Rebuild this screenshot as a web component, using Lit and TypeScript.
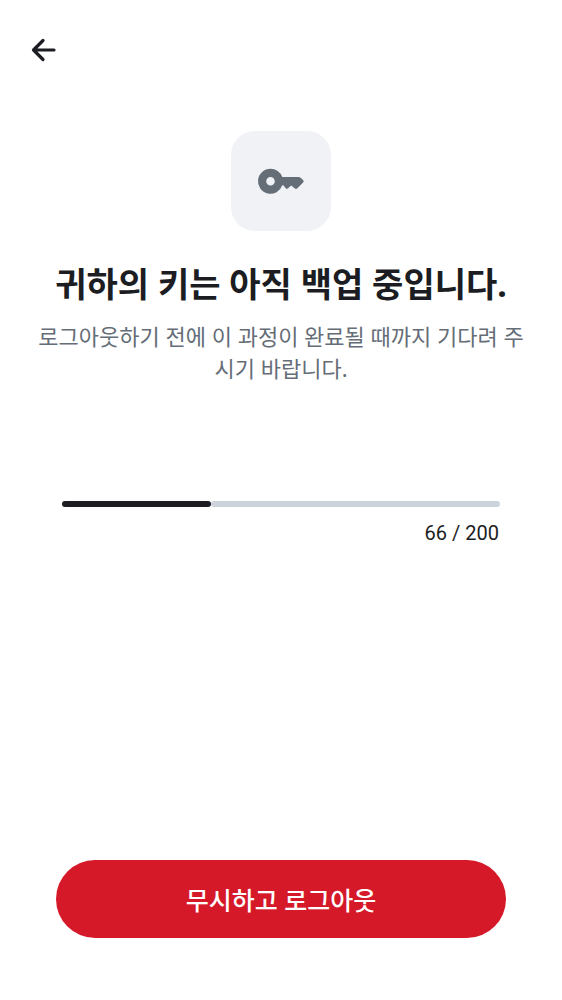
import { LitElement, html, css } from "lit";
import { customElement, property } from "lit/decorators.js";

@customElement("app-root")
export class AppRoot extends LitElement {
  @property({ type: Number }) done = 66;
  @property({ type: Number }) total = 200;

  static styles = css`
    :host {
      display: flex;
      flex-direction: column;
      box-sizing: border-box;
      min-height: 100vh;
      background: #fff;
      color: #1b1d22;
      font-family: "Noto Sans", "Noto Sans CJK KR", sans-serif;
    }
    header {
      padding: 32px 26px;
      display: flex;
    }
    .back {
      width: 36px;
      height: 36px;
      padding: 0;
      border: 0;
      background: none;
      display: grid;
      place-items: center;
      color: #1b1d22;
    }
    main {
      flex: 1;
      padding: 31px 32px 0;
      display: flex;
      flex-direction: column;
      align-items: center;
    }
    .tile {
      width: 100px;
      height: 100px;
      border-radius: 24px;
      background: #f0f2f5;
      display: grid;
      place-items: center;
      color: #656d77;
    }
    h1 {
      margin: 29px 0 0;
      font-size: 34px;
      line-height: 48px;
      font-weight: 700;
      text-align: center;
    }
    p {
      margin: 12px 0 0;
      font-size: 22px;
      line-height: 32px;
      color: #656d77;
      text-align: center;
    }
    .progress {
      align-self: stretch;
      margin: 117px 30px 0;
    }
    .track {
      display: flex;
      padding-right: 6px;
    }
    .bar {
      flex: none;
      height: 6px;
      padding: 0 3px;
      border-radius: 3px;
      background: #1b1d22;
    }
    .rest {
      flex: 1;
      margin-right: -6px;
      border-radius: 3px;
      background: #cdd3da;
    }
    .count {
      margin-top: 13px;
      padding-right: 1px;
      font-family: Roboto, sans-serif;
      font-size: 20px;
      line-height: 26px;
      text-align: right;
    }
    footer {
      padding: 0 56px 62px;
    }
    .logout {
      width: 100%;
      height: 78px;
      padding: 2px 0 0;
      border: 0;
      border-radius: 39px;
      background: #d51928;
      color: #fff;
      font: 500 25px/36px "Noto Sans", "Noto Sans CJK KR", sans-serif;
    }
    svg {
      display: block;
    }
  `;

  render() {
    return html`
      <header>
        <button class="back" aria-label="뒤로">
          <svg width="36" height="36" viewBox="0 0 36 36" fill="none" stroke="currentColor" stroke-width="3.2" stroke-linecap="round" stroke-linejoin="round">
            <path d="M28 18H8M17 8.5L7.500 18L17 27.500" />
          </svg>
        </button>
      </header>
      <main>
        <div class="tile">
          <svg width="54" height="34" viewBox="0 0 54 34" fill="currentColor" fill-rule="evenodd">
            <path d="M16.500 4.700a12.500 12.500 0 1 0 11.800 16.600h1l2.500 3q1 1 2.200 0L37.200 21.500l3.700 3.100q1.200.900 2.200 0l6-6.200q1.200-1.200 0-2.400L46.300 13.600q-.7-.6-1.600-.6H28.300A12.500 12.500 0 0 0 16.500 4.700zM16.500 12.900a4.300 4.300 0 1 1 0 8.600 4.300 4.300 0 0 1 0-8.600z" />
          </svg>
        </div>
        <h1>귀하의 키는 아직 백업 중입니다.</h1>
        <p>로그아웃하기 전에 이 과정이 완료될 때까지 기다려 주시기 바랍니다.</p>
        <div class="progress">
          <div class="track" role="progressbar" aria-label="키 백업" aria-valuemin="0" aria-valuenow=${this.done} aria-valuemax=${this.total}>
            <div class="bar" style="width:${(this.done / this.total) * 100}%"></div>
            <div class="rest"></div>
          </div>
          <div class="count">${this.done} / ${this.total}</div>
        </div>
      </main>
      <footer><button class="logout">무시하고 로그아웃</button></footer>
    `;
  }
}
